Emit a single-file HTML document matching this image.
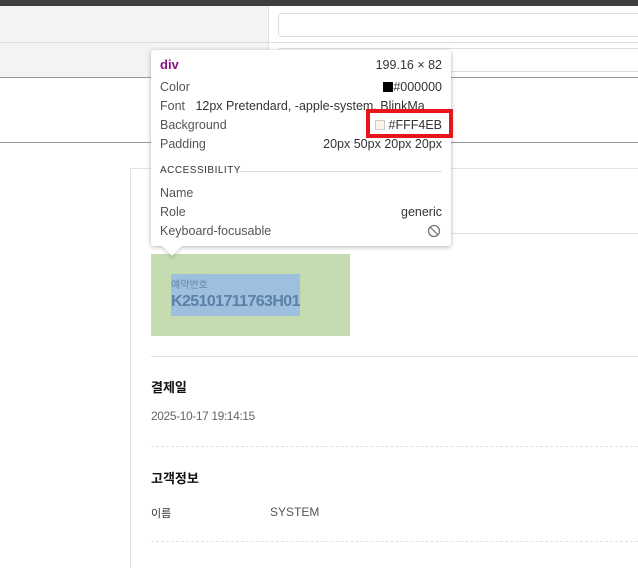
<!DOCTYPE html><html><head><meta charset="utf-8"><style>
*{margin:0;padding:0;box-sizing:border-box}
body{width:638px;height:562px;overflow:hidden;background:#fff;position:relative;font-family:"Liberation Sans","Noto Sans CJK KR",sans-serif}
.a{position:absolute}
.tt{font-family:"Liberation Sans",sans-serif;font-size:12.5px;color:#555}
</style></head><body>
<div class="a" style="left:0;top:0;width:638px;height:6px;background:#3f3f3f"></div>
<div class="a" style="left:0;top:6px;width:268px;height:71px;background:#f3f3f3"></div>
<div class="a" style="left:0;top:42px;width:268px;height:1px;background:#ddd"></div>
<div class="a" style="left:268px;top:6px;width:1px;height:71px;background:#e0e0e0"></div>
<div class="a" style="left:268px;top:42px;width:370px;height:1px;background:#e0e0e0"></div>
<div class="a" style="left:278px;top:13px;width:370px;height:24px;border:1px solid #ddd;border-radius:3px;background:#fff"></div>
<div class="a" style="left:278px;top:48px;width:370px;height:24px;border:1px solid #ddd;border-radius:3px;background:#fff"></div>
<div class="a" style="left:0;top:77px;width:638px;height:1px;background:#999"></div>
<div class="a" style="left:0;top:142px;width:638px;height:1px;background:#999"></div>
<div class="a" style="left:130px;top:168px;width:520px;height:400px;border-left:1px solid #e2e2e2;border-top:1px solid #e2e2e2"></div>
<div class="a" style="left:151px;top:233px;width:487px;height:1px;background:#e2e2e2"></div>
<div class="a" style="left:151px;top:254px;width:199px;height:82px;background:#c5dbb0"></div>
<div class="a" style="left:171px;top:274px;width:129px;height:42px;background:#9ec0de"></div>
<div class="a" style="left:171px;top:276px;font-size:10px;color:#6a86a6">예약번호</div>
<div class="a" style="left:171px;top:293px;font-size:16px;font-weight:bold;color:#5b7fa8;letter-spacing:-0.6px">K25101711763H01</div>
<div class="a" style="left:151px;top:356px;width:487px;height:1px;background:#e2e2e2"></div>
<div class="a" style="left:151px;top:377px;font-size:13px;font-weight:bold;color:#111">결제일</div>
<div class="a" style="left:151px;top:409px;font-size:12px;color:#666;letter-spacing:-0.4px">2025-10-17 19:14:15</div>
<div class="a" style="left:151px;top:446px;width:487px;border-top:1px dashed #e2e2e2"></div>
<div class="a" style="left:151px;top:468px;font-size:13px;font-weight:bold;color:#111">고객정보</div>
<div class="a" style="left:151px;top:505px;font-size:11px;color:#333">이름</div>
<div class="a" style="left:270px;top:505px;font-size:12px;color:#555">SYSTEM</div>
<div class="a" style="left:151px;top:541px;width:487px;border-top:1px dashed #e2e2e2"></div>
<div class="a" style="left:151px;top:50px;width:300px;height:196px;background:#fff;border-radius:3px;box-shadow:0 1px 5px rgba(0,0,0,.3)"></div>
<div class="a" style="left:165px;top:239px;width:14px;height:14px;background:#fff;transform:rotate(45deg);box-shadow:2px 2px 3px rgba(0,0,0,.12)"></div>
<div class="a" style="left:151px;top:230px;width:300px;height:16px;background:#fff;border-radius:0 0 3px 3px"></div>
<div class="a tt" style="left:160px;top:57px;color:#881280;font-weight:bold;font-size:13px">div</div>
<div class="a tt" style="right:196px;top:58px;color:#333">199.16 × 82</div>
<div class="a tt" style="left:160px;top:80px">Color</div>
<div class="a tt" style="right:196px;top:80px;color:#333"><span style="display:inline-block;width:10px;height:10px;background:#000;vertical-align:-1px"></span>#000000</div>
<div class="a tt" style="left:160px;top:99px;white-space:nowrap;width:282px;overflow:hidden">Font&nbsp;&nbsp; <span style="color:#333">12px Pretendard, -apple-system, BlinkMa</span></div>
<div class="a tt" style="left:160px;top:118px">Background</div>
<div class="a" style="left:366px;top:109px;width:87px;height:29px;border:4px solid #e8161c;background:#fff"></div>
<div class="a tt" style="right:196px;top:118px;color:#333"><span style="display:inline-block;width:10px;height:10px;background:#FFF4EB;border:1px solid #ccc;vertical-align:-1px"></span> #FFF4EB</div>
<div class="a tt" style="left:160px;top:137px">Padding</div>
<div class="a tt" style="right:196px;top:137px;color:#333">20px 50px 20px 20px</div>
<div class="a tt" style="left:160px;top:165px;font-size:10px;color:#333;letter-spacing:0.5px">ACCESSIBILITY</div>
<div class="a" style="left:240px;top:171px;width:202px;height:1px;background:#ddd"></div>
<div class="a tt" style="left:160px;top:186px">Name</div>
<div class="a tt" style="left:160px;top:205px">Role</div>
<div class="a tt" style="right:196px;top:205px;color:#333">generic</div>
<div class="a tt" style="left:160px;top:224px">Keyboard-focusable</div>
<svg class="a" style="left:427px;top:224px" width="14" height="14" viewBox="0 0 14 14"><circle cx="7" cy="7" r="5.5" fill="none" stroke="#777" stroke-width="1.3"/><line x1="3.2" y1="3.2" x2="10.8" y2="10.8" stroke="#777" stroke-width="1.3"/></svg>
</body></html>
